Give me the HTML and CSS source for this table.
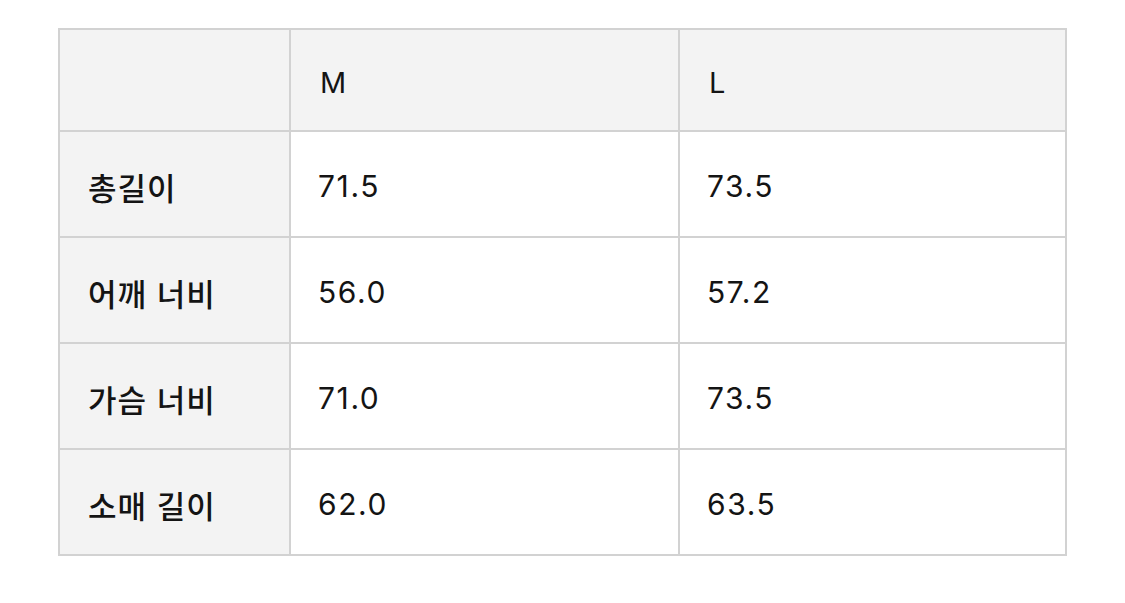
FILE: index.html
```html
<!DOCTYPE html>
<html lang="ko">
<head>
<meta charset="utf-8">
<title>사이즈 표</title>
<link rel="stylesheet" href="styles.css">
</head>
<body>
<div class="page">
  <table class="size-table">
    <colgroup>
      <col class="col-label">
      <col class="col-m">
      <col class="col-l">
    </colgroup>
    <thead>
      <tr class="head-row">
        <th class="cell cell-label"></th>
        <th class="cell cell-head">M</th>
        <th class="cell cell-head">L</th>
      </tr>
    </thead>
    <tbody>
      <tr class="body-row">
        <th class="cell cell-label">총길이</th>
        <td class="cell cell-value">71.5</td>
        <td class="cell cell-value">73.5</td>
      </tr>
      <tr class="body-row">
        <th class="cell cell-label">어깨 너비</th>
        <td class="cell cell-value">56.0</td>
        <td class="cell cell-value">57.2</td>
      </tr>
      <tr class="body-row">
        <th class="cell cell-label">가슴 너비</th>
        <td class="cell cell-value">71.0</td>
        <td class="cell cell-value">73.5</td>
      </tr>
      <tr class="body-row">
        <th class="cell cell-label">소매 길이</th>
        <td class="cell cell-value">62.0</td>
        <td class="cell cell-value">63.5</td>
      </tr>
    </tbody>
  </table>
</div>
</body>
</html>
```

FILE: styles.css
```css
html, body {
  margin: 0;
  padding: 0;
  background: #ffffff;
}

.page {
  padding: 28px 0 0 58px;
}

.size-table {
  width: 1009px;
  table-layout: fixed;
  border-collapse: separate;
  border-spacing: 2px;
  background: #d2d2d2;
  color: #141414;
}

.col-label { width: 229px; }
.col-m { width: 387px; }
.col-l { width: 385px; }

.cell {
  padding: 4px 0 0 28px;
  text-align: left;
  vertical-align: middle;
  font-weight: 400;
}

.head-row .cell {
  height: 96px;
  background: #f3f3f3;
}

.body-row .cell {
  height: 100px;
  background: #ffffff;
}

.body-row .cell-label {
  background: #f3f3f3;
}

.cell-label {
  font-family: "Noto Sans CJK KR", "Noto Sans", sans-serif;
  font-size: 31px;
  font-weight: 500;
  letter-spacing: 1px;
}

.cell-head,
.cell-value {
  font-family: Inter, "Noto Sans CJK KR", sans-serif;
  font-weight: 400;
}

.cell-head {
  font-size: 29px;
  letter-spacing: 0;
  padding-left: 29px;
}

.cell-value {
  font-size: 30px;
  letter-spacing: 1.6px;
  padding-left: 27px;
}
```
